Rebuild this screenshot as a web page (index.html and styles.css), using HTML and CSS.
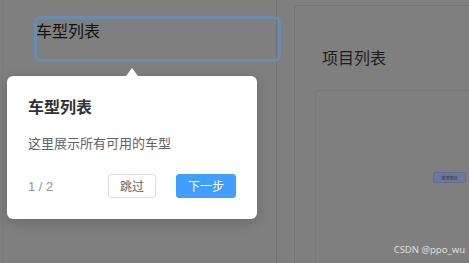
FILE: index.html
```html
<!DOCTYPE html>
<html lang="zh">
<head>
<meta charset="utf-8">
<link rel="stylesheet" href="styles.css">
</head>
<body>
<div class="page">
  <section class="left-panel">
    <div class="car-title">车型列表</div>
  </section>
  <section class="right-panel">
    <h2 class="panel-title">项目列表</h2>
    <div class="inner-box">
      <div class="mini-btn-row"><span class="mini-btn">新增项目</span></div>
    </div>
  </section>
</div>

<div class="highlight-ring"></div>

<div class="popover">
  <div class="popover-arrow"></div>
  <div class="popover-title">车型列表</div>
  <div class="popover-desc">这里展示所有可用的车型</div>
  <div class="popover-footer">
    <span class="progress">1 / 2</span>
    <div class="btns">
      <button class="btn btn-skip">跳过</button>
      <button class="btn btn-next">下一步</button>
    </div>
  </div>
</div>

<div class="watermark">CSDN @ppo_wu</div>
</body>
</html>
```

FILE: styles.css
```css
* { box-sizing: border-box; }
html, body {
  margin: 0;
  padding: 0;
  width: 469px;
  height: 263px;
  overflow: hidden;
  background: #7f7f7f;
  font-family: "Noto Sans CJK SC", "Noto Sans", sans-serif;
}
.page {
  display: flex;
  height: 263px;
  gap: 17px;
  padding-left: 2px;
}
.left-panel {
  width: 275px;
  border-left: 1px solid #7a7a7a;
  border-right: 1px solid #737373;
  padding: 19px 0 0 33px;
}
.car-title {
  font-size: 16px;
  line-height: 22px;
  color: #111;
}
.right-panel {
  flex: 1;
  display: flex;
  flex-direction: column;
  margin-top: 5px;
  border: 1px solid #747474;
  border-right: none;
  border-bottom: none;
  border-radius: 4px 0 0 0;
  padding: 39px 0 0 20px;
}
.panel-title {
  margin: 0 0 0 7px;
  font-size: 16px;
  font-weight: normal;
  line-height: 24px;
  color: #1e1e1e;
}
.inner-box {
  flex: 1;
  margin-top: 21px;
  border: 1px solid #777777;
  border-right: none;
  border-bottom: none;
  border-radius: 3px 0 0 0;
  padding-top: 81px;
}
.mini-btn-row {
  display: flex;
  justify-content: flex-end;
  padding-right: 3px;
}
.mini-btn {
  display: flex;
  align-items: center;
  justify-content: center;
  width: 33px;
  height: 11px;
  background: #6a7a98;
  border: 1px solid #5e6f8f;
  border-radius: 2px;
  font-size: 4px;
  color: #2a2a2a;
  overflow: hidden;
}
.highlight-ring {
  position: absolute;
  left: 34px;
  top: 16px;
  width: 247px;
  height: 46px;
  border: 3px solid #6a8bb2;
  border-radius: 7px;
}
.popover {
  position: absolute;
  left: 7px;
  top: 76px;
  width: 250px;
  height: 143px;
  background: #fff;
  border-radius: 6px;
  box-shadow: 0 3px 14px rgba(0, 0, 0, 0.18);
  padding: 18px 21px 21px 21px;
  display: flex;
  flex-direction: column;
}
.popover-arrow {
  position: absolute;
  left: 119px;
  top: -8px;
  width: 0;
  height: 0;
  border-left: 6px solid transparent;
  border-right: 6px solid transparent;
  border-bottom: 8px solid #fff;
}
.popover-title {
  font-size: 16px;
  font-weight: bold;
  line-height: 24px;
  color: #303133;
}
.popover-desc {
  margin-top: 15px;
  font-size: 13px;
  line-height: 20px;
  color: #606266;
}
.popover-footer {
  margin-top: 21px;
  display: flex;
  align-items: center;
  justify-content: space-between;
  height: 24px;
}
.progress {
  font-size: 13px;
  color: #909399;
  font-family: "Liberation Sans", "Noto Sans CJK SC", sans-serif;
}
.btns {
  display: flex;
  gap: 20px;
}
.btn {
  height: 24px;
  border-radius: 3px;
  font-size: 12px;
  font-family: "Noto Sans CJK SC", sans-serif;
  padding: 0;
  line-height: 22px;
  cursor: pointer;
}
.btn-skip {
  width: 48px;
  background: #fff;
  border: 1px solid #dcdfe6;
  color: #606266;
}
.btn-next {
  width: 60px;
  background: #409eff;
  border: 1px solid #409eff;
  color: #fff;
}
.watermark {
  position: absolute;
  right: 4px;
  bottom: 7px;
  font-family: "Noto Sans", "DejaVu Sans", sans-serif;
  font-size: 9.5px;
  color: rgba(255, 255, 255, 0.75);
}
```
